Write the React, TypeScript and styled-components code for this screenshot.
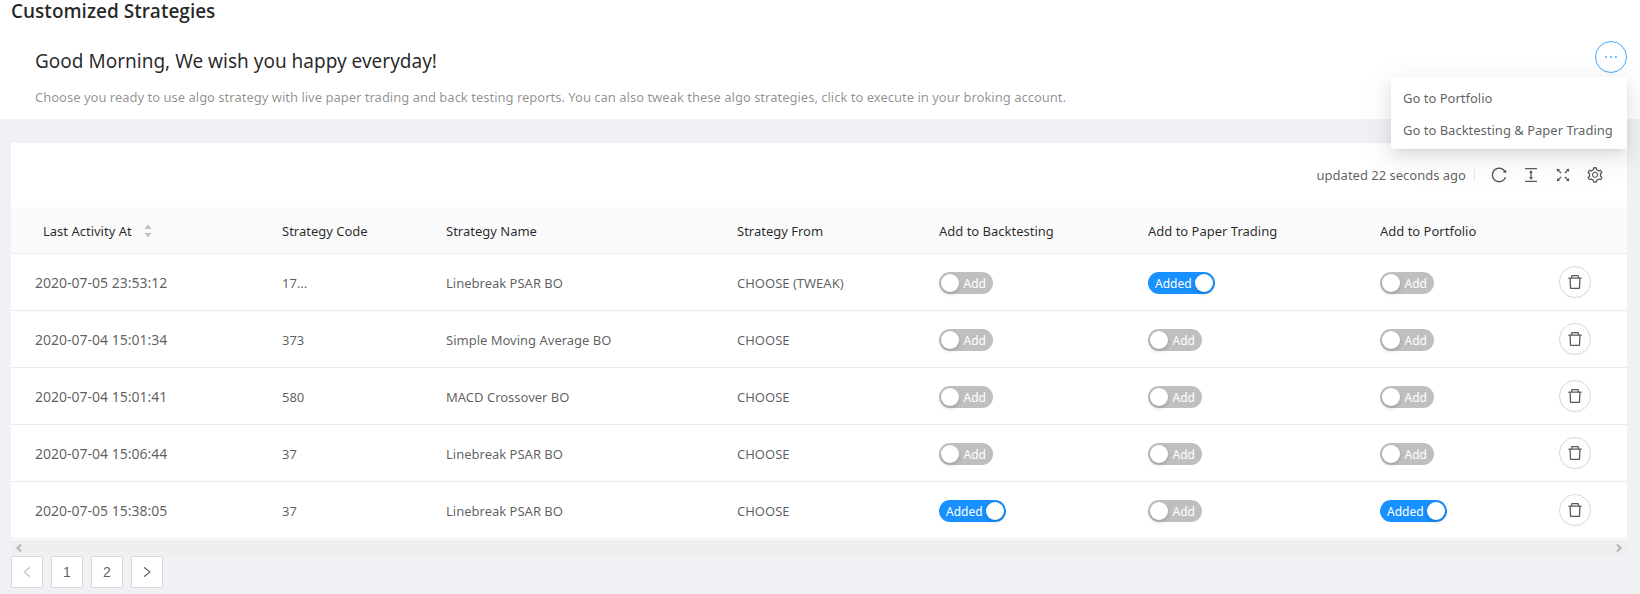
import { useState } from "react";
import styled, { createGlobalStyle } from "styled-components";
import {
  AiOutlineColumnHeight,
  AiOutlineDelete,
  AiOutlineEllipsis,
  AiOutlineFullscreen,
  AiOutlineLeft,
  AiOutlineReload,
  AiOutlineRight,
  AiOutlineSetting,
} from "react-icons/ai";

const text = "rgba(0, 0, 0, 0.65)";
const heading = "rgba(0, 0, 0, 0.85)";
const line = "#ececec";
const blue = "#1890ff";

const GlobalStyle = createGlobalStyle`
  *, *::before, *::after { box-sizing: border-box; }
  body {
    margin: 0;
    background: #f0f1f5;
    color: ${text};
    font-family: "Segoe UI", "Noto Sans", "Open Sans", sans-serif;
    font-size: 13px;
    line-height: 22px;
  }
  button { font: inherit; color: inherit; padding: 0; cursor: pointer; }
`;

const PageHeader = styled.header`
  background: #fff;
  padding: 0 13px 11px 11px;
`;

const PageTitle = styled.h1`
  margin: 0;
  color: ${heading};
  font-family: "Segoe UI", "Open Sans", sans-serif;
  font-size: 19px;
  line-height: 22px;
  font-weight: 600;
`;

const Greeting = styled.div`
  display: flex;
  justify-content: space-between;
  align-items: flex-start;
  padding: 19px 0 0 24px;
`;

const GreetingTitle = styled.h2`
  margin: 8px 0 13px;
  color: ${heading};
  font-size: 19px;
  line-height: 24px;
  font-weight: 400;
`;

const Description = styled.p`
  margin: 0;
  color: rgba(0, 0, 0, 0.45);
`;

const MenuAnchor = styled.div`
  position: relative;
`;

const CircleButton = styled.button<{ $active?: boolean }>`
  display: flex;
  align-items: center;
  justify-content: center;
  width: 32px;
  height: 32px;
  border: 1px solid ${(p) => (p.$active ? "#40a9ff" : "#d9d9d9")};
  border-radius: 50%;
  background: #fff;
  color: ${(p) => (p.$active ? "#40a9ff" : text)};
  font-size: 18px;
  box-shadow: 0 2px 0 rgba(0, 0, 0, 0.015);
`;

const Menu = styled.ul`
  position: absolute;
  z-index: 2;
  top: 100%;
  right: 0;
  min-width: 236px;
  margin: 4px 0 0;
  padding: 4px 0;
  list-style: none;
  background: #fff;
  border-radius: 2px;
  white-space: nowrap;
  box-shadow: 0 3px 6px -4px rgba(0, 0, 0, 0.12), 0 6px 16px 0 rgba(0, 0, 0, 0.08),
    0 9px 28px 8px rgba(0, 0, 0, 0.05);
`;

const MenuLink = styled.a`
  display: block;
  padding: 6px 12px 4px;
  color: ${text};
  text-decoration: none;
`;

const Content = styled.main`
  padding: 24px 13px 6px 11px;
`;

const Card = styled.section`
  background: #fff;
  border-radius: 2px 2px 0 0;
`;

const Toolbar = styled.div`
  display: flex;
  align-items: center;
  justify-content: flex-end;
  height: 64px;
  padding: 0 23px;
`;

const Divider = styled.span`
  width: 1px;
  height: 12px;
  margin: 0 8px;
  background: #e8e8e8;
`;

const ToolGroup = styled.div`
  display: flex;
  gap: 14px;
  padding-left: 7px;
`;

const ToolButton = styled.button`
  display: flex;
  border: 0;
  background: none;
  font-size: 18px;
`;

const Table = styled.table`
  width: 100%;
  table-layout: fixed;
  border-collapse: separate;
  border-spacing: 0;
  padding-bottom: 1px;
`;

const HeadCell = styled.th`
  height: 47px;
  padding: 2px 8px 0;
  border-bottom: 1px solid ${line};
  background: #fafafa;
  color: ${heading};
  font-weight: 400;
  text-align: left;
  &:first-child { padding-left: 32px; }
`;

const Cell = styled.td`
  height: 57px;
  padding: 0 8px;
  border-bottom: 1px solid ${line};
  &:first-child { padding-left: 24px; }
`;

const CellText = styled.span`
  display: block;
  padding-top: 2px;
`;

const Timestamp = styled.time`
  display: block;
  padding-top: 1px;
  font-size: 14px;
`;

const SortButton = styled.button`
  display: flex;
  align-items: center;
  gap: 12px;
  border: 0;
  background: none;
`;

const SwitchTrack = styled.label<{ $on: boolean }>`
  position: relative;
  display: flex;
  flex-direction: ${(p) => (p.$on ? "row-reverse" : "row")};
  align-items: center;
  justify-content: space-between;
  width: ${(p) => (p.$on ? 67 : 54)}px;
  height: 22px;
  margin-top: 2px;
  padding: ${(p) => (p.$on ? "0 2px 0 7px" : "0 7px 0 2px")};
  border-radius: 11px;
  background: ${(p) => (p.$on ? blue : "#bfbfbf")};
  color: #fff;
  font-size: 12px;
  line-height: 22px;
  cursor: pointer;
`;

const SwitchText = styled.span`
  padding-top: 2px;
`;

const SwitchInput = styled.input`
  position: absolute;
  inset: 0;
  width: 100%;
  height: 100%;
  margin: 0;
  opacity: 0;
  cursor: pointer;
`;

const Knob = styled.span`
  width: 18px;
  height: 18px;
  border-radius: 50%;
  background: #fff;
  box-shadow: 0 2px 4px rgba(0, 35, 11, 0.2);
`;

const ScrollTrack = styled.div`
  display: flex;
  justify-content: space-between;
  align-items: center;
  height: 16px;
  padding: 0 4px;
  background: #efefef;
`;

const ScrollButton = styled.button`
  display: flex;
  border: 0;
  background: none;
  color: #b4b4b4;
`;

const Pager = styled.nav`
  display: flex;
  gap: 8px;
`;

const PageButton = styled.button`
  display: flex;
  align-items: center;
  justify-content: center;
  width: 32px;
  height: 32px;
  border: 1px solid #d9d9d9;
  border-radius: 2px;
  background: #fff;
  font-family: Arial, "Liberation Sans", sans-serif;
  font-size: 14px;
  &:disabled { color: rgba(0, 0, 0, 0.25); cursor: not-allowed; }
`;

type Strategy = {
  at: string;
  code: string;
  name: string;
  from: string;
  flags: [boolean, boolean, boolean];
};

const strategies: Strategy[] = [
  { at: "2020-07-05 23:53:12", code: "17...", name: "Linebreak PSAR BO", from: "CHOOSE (TWEAK)", flags: [false, true, false] },
  { at: "2020-07-04 15:01:34", code: "373", name: "Simple Moving Average BO", from: "CHOOSE", flags: [false, false, false] },
  { at: "2020-07-04 15:01:41", code: "580", name: "MACD Crossover BO", from: "CHOOSE", flags: [false, false, false] },
  { at: "2020-07-04 15:06:44", code: "37", name: "Linebreak PSAR BO", from: "CHOOSE", flags: [false, false, false] },
  { at: "2020-07-05 15:38:05", code: "37", name: "Linebreak PSAR BO", from: "CHOOSE", flags: [true, false, true] },
];

const targets = ["Add to Backtesting", "Add to Paper Trading", "Add to Portfolio"];
const columnWidths = [263, 164, 291, 202, 209, 232, 179, 76];

function Switch({ label, initial }: { label: string; initial: boolean }) {
  const [on, setOn] = useState(initial);
  return (
    <SwitchTrack $on={on}>
      <SwitchInput
        type="checkbox"
        role="switch"
        aria-label={label}
        checked={on}
        onChange={(e) => setOn(e.target.checked)}
      />
      <Knob />
      <SwitchText>{on ? "Added" : "Add"}</SwitchText>
    </SwitchTrack>
  );
}

function SortArrows() {
  return (
    <svg width="8" height="14" viewBox="0 0 8 14" fill="#bfbfbf">
      <path d="M4 0.5L7.5 5H0.5Z" />
      <path d="M4 13.5L7.5 9H0.5Z" />
    </svg>
  );
}

function ScrollArrow({ direction }: { direction: "left" | "right" }) {
  return (
    <svg width="8" height="8" viewBox="0 0 8 8" fill="none" stroke="currentColor" strokeWidth="2">
      <path d={direction === "left" ? "M6 0.5L2.5 4L6 7.5" : "M2 0.5L5.5 4L2 7.5"} />
    </svg>
  );
}

export default function App() {
  const [menuOpen, setMenuOpen] = useState(true);
  return (
    <>
      <GlobalStyle />
      <PageHeader>
        <PageTitle>Customized Strategies</PageTitle>
        <Greeting>
          <div>
            <GreetingTitle>Good Morning, We wish you happy everyday!</GreetingTitle>
            <Description>
              Choose you ready to use algo strategy with live paper trading and back testing reports. You can
              also tweak these algo strategies, click to execute in your broking account.
            </Description>
          </div>
          <MenuAnchor>
            <CircleButton $active aria-label="More" aria-expanded={menuOpen} onClick={() => setMenuOpen(!menuOpen)}>
              <AiOutlineEllipsis />
            </CircleButton>
            {menuOpen && (
              <Menu>
                <li><MenuLink href="#portfolio">Go to Portfolio</MenuLink></li>
                <li><MenuLink href="#backtesting">Go to Backtesting &amp; Paper Trading</MenuLink></li>
              </Menu>
            )}
          </MenuAnchor>
        </Greeting>
      </PageHeader>
      <Content>
        <Card>
          <Toolbar>
            <span>updated 22 seconds ago</span>
            <Divider />
            <ToolGroup>
              <ToolButton aria-label="Reload"><AiOutlineReload /></ToolButton>
              <ToolButton aria-label="Density"><AiOutlineColumnHeight /></ToolButton>
              <ToolButton aria-label="Full screen"><AiOutlineFullscreen /></ToolButton>
              <ToolButton aria-label="Settings"><AiOutlineSetting /></ToolButton>
            </ToolGroup>
          </Toolbar>
          <Table>
            <colgroup>
              {columnWidths.map((w, i) => <col key={i} width={w} />)}
            </colgroup>
            <thead>
              <tr>
                <HeadCell>
                  <SortButton>
                    Last Activity At
                    <SortArrows />
                  </SortButton>
                </HeadCell>
                <HeadCell>Strategy Code</HeadCell>
                <HeadCell>Strategy Name</HeadCell>
                <HeadCell>Strategy From</HeadCell>
                {targets.map((t) => <HeadCell key={t}>{t}</HeadCell>)}
                <HeadCell />
              </tr>
            </thead>
            <tbody>
              {strategies.map((s) => (
                <tr key={s.at}>
                  <Cell><Timestamp>{s.at}</Timestamp></Cell>
                  <Cell><CellText>{s.code}</CellText></Cell>
                  <Cell><CellText>{s.name}</CellText></Cell>
                  <Cell><CellText>{s.from}</CellText></Cell>
                  {targets.map((t, i) => (
                    <Cell key={t}><Switch label={t} initial={s.flags[i]} /></Cell>
                  ))}
                  <Cell>
                    <CircleButton aria-label="Delete"><AiOutlineDelete /></CircleButton>
                  </Cell>
                </tr>
              ))}
            </tbody>
          </Table>
          <ScrollTrack>
            <ScrollButton aria-label="Scroll left"><ScrollArrow direction="left" /></ScrollButton>
            <ScrollButton aria-label="Scroll right"><ScrollArrow direction="right" /></ScrollButton>
          </ScrollTrack>
        </Card>
        <Pager aria-label="Pagination">
          <PageButton disabled aria-label="Previous page"><AiOutlineLeft /></PageButton>
          <PageButton>1</PageButton>
          <PageButton>2</PageButton>
          <PageButton aria-label="Next page"><AiOutlineRight /></PageButton>
        </Pager>
      </Content>
    </>
  );
}
